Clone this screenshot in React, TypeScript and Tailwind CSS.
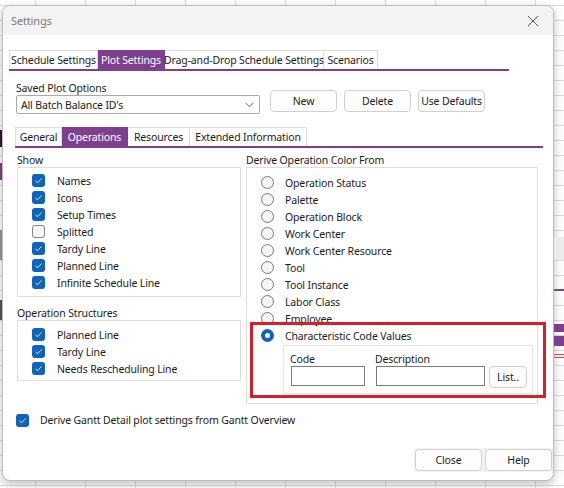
import React from "react";

function Check({ on }: { on: boolean }) {
  if (!on) {
    return <span className="w-[13px] h-[13px] shrink-0 rounded-[3px] border border-[#858585] bg-[#f7f7f7]" />;
  }
  return (
    <span className="w-[13px] h-[13px] shrink-0 rounded-[3px] bg-[#0e63be] flex items-center justify-center">
      <svg width="9" height="9" viewBox="0 0 9 9">
        <path d="M1.6 4.9 L3.5 6.7 L7.5 2.5" fill="none" stroke="#fff" strokeWidth="0.9" />
      </svg>
    </span>
  );
}

function Radio({ on }: { on?: boolean }) {
  if (on) {
    return (
      <span className="w-[13px] h-[13px] shrink-0 rounded-full bg-[#0e63be] flex items-center justify-center">
        <span className="w-[5px] h-[5px] rounded-full bg-white" />
      </span>
    );
  }
  return <span className="w-[13px] h-[13px] shrink-0 rounded-full border border-[#7a7a7a] bg-[#f5f5f5]" />;
}

function CheckRow({ label, on = true }: { label: string; on?: boolean }) {
  return (
    <div className="h-[17px] flex items-center gap-[12px]">
      <Check on={on} />
      <span>{label}</span>
    </div>
  );
}

function RadioRow({ label, on }: { label: string; on?: boolean }) {
  return (
    <div className="h-[17px] flex items-center gap-[11px]">
      <Radio on={on} />
      <span>{label}</span>
    </div>
  );
}

function Button({ label, w }: { label: string; w: string }) {
  return (
    <div className={`${w} h-[22px] shrink-0 whitespace-nowrap rounded-[4px] border border-[#d0d0d0] bg-[#fdfdfd] flex items-center justify-center`}>
      {label}
    </div>
  );
}

function Tab({ label, w, active, first }: { label: string; w: string; active?: boolean; first?: boolean }) {
  return (
    <div
      className={`${w} h-full whitespace-nowrap flex items-center justify-center border-t border-r ${first ? "border-l" : ""} ${
        active ? "bg-[#7f3f8f] text-white border-[#7f3f8f]" : "bg-white border-[#dcdcdc]"
      }`}
    >
      {label}
    </div>
  );
}

const radios = [
  "Operation Status",
  "Palette",
  "Operation Block",
  "Work Center",
  "Work Center Resource",
  "Tool",
  "Tool Instance",
  "Labor Class",
  "Employee",
];

export default function App() {
  return (
    <div className="relative w-[564px] h-[488px] overflow-hidden bg-white bg-[linear-gradient(to_bottom,#dcdcdc_1px,transparent_1px),linear-gradient(to_right,#dcdcdc_1px,transparent_1px)] bg-size-[50px_15px] bg-position-[35px_5px] font-['Noto_Sans',sans-serif] text-[10.5px] tracking-[-0.15px] text-[#1b1b1b] leading-[14px]">
      <div className="flex h-full">
        {/* left strip of the sheet behind */}
        <div className="w-[2px] shrink-0 flex flex-col">
          <div className="h-[130px]" />
          <div className="h-[17px] bg-[#2a1d2e]" />
          <div className="h-[16px]" />
          <div className="h-[17px] bg-[#7f3f8f]" />
          <div className="h-[50px]" />
          <div className="h-[30px] bg-[#9a9a9a]" />
          <div className="h-[40px]" />
          <div className="h-[20px] bg-[#555]" />
        </div>

        {/* dialog */}
        <div className="mt-[5px] w-[552px] h-[476px] shrink-0 flex flex-col rounded-[8px] border border-[#bcbcbc] bg-white shadow-[0_3px_10px_rgba(0,0,0,0.25)] overflow-hidden">
          <div className="h-[29px] shrink-0 bg-[#f3f3f3] flex items-center justify-between pl-[8px] pr-[14px]">
            <span className="text-[11px] text-[#7c7c7c]">Settings</span>
            <svg width="12" height="12" viewBox="0 0 12 12">
              <path d="M1 1 L11 11 M11 1 L1 11" stroke="#5a5a5a" strokeWidth="1" />
            </svg>
          </div>

          <div className="flex-1 flex flex-col pl-[6px]">
            {/* main tabs */}
            <div className="mt-[15px] h-[19px] flex">
              <Tab label="Schedule Settings" w="w-[89px]" first />
              <Tab label="Plot Settings" w="w-[67px]" active />
              <Tab label="Drag-and-Drop Schedule Settings" w="w-[159px]" />
              <Tab label="Scenarios" w="w-[54px]" />
            </div>
            <div className="h-[2px] w-[500px] bg-[#7f3f8f]" />

            {/* saved plot options */}
            <div className="mt-[10px] ml-[7px] flex items-start">
              <div className="flex flex-col">
                <span className="h-[14px]">Saved Plot Options</span>
                <div className="w-[244px] h-[19px] border border-[#a9a9a9] rounded-[2px] flex items-center justify-between pl-[4px] pr-[5px]">
                  <span>All Batch Balance ID's</span>
                  <svg width="9" height="6" viewBox="0 0 9 6">
                    <path d="M0.5 0.8 L4.5 4.8 L8.5 0.8" fill="none" stroke="#555" strokeWidth="0.9" />
                  </svg>
                </div>
              </div>
              <div className="mt-[9px] ml-[10px] flex gap-[7px]">
                <Button label="New" w="w-[67px]" />
                <Button label="Delete" w="w-[67px]" />
                <Button label="Use Defaults" w="w-[67px]" />
              </div>
            </div>

            {/* sub tabs */}
            <div className="mt-[13px] ml-[6px] h-[19px] flex">
              <Tab label="General" w="w-[47px]" first />
              <Tab label="Operations" w="w-[66px]" active />
              <Tab label="Resources" w="w-[62px]" />
              <Tab label="Extended Information" w="w-[117px]" />
            </div>
            <div className="ml-[6px] h-[2px] w-[528px] bg-[#7f3f8f]" />

            {/* columns */}
            <div className="mt-[5px] ml-[8px] flex">
              <div className="w-[224px] flex flex-col">
                <span className="h-[14px]">Show</span>
                <div className="h-[130px] border border-[#dedede] pt-[4px] pl-[14px] flex flex-col">
                  <CheckRow label="Names" />
                  <CheckRow label="Icons" />
                  <CheckRow label="Setup Times" />
                  <CheckRow label="Splitted" on={false} />
                  <CheckRow label="Tardy Line" />
                  <CheckRow label="Planned Line" />
                  <CheckRow label="Infinite Schedule Line" />
                </div>
                <span className="mt-[9px] h-[14px]">Operation Structures</span>
                <div className="h-[61px] border border-[#dedede] pt-[5px] pl-[14px] flex flex-col">
                  <CheckRow label="Planned Line" />
                  <CheckRow label="Tardy Line" />
                  <CheckRow label="Needs Rescheduling Line" />
                </div>
              </div>

              <div className="ml-[5px] w-[292px] flex flex-col">
                <span className="h-[14px]">Derive Operation Color From</span>
                <div className="h-[237px] border border-[#dedede] pt-[6px] pl-[14px] flex flex-col">
                  {radios.map((r) => (
                    <RadioRow key={r} label={r} />
                  ))}
                  <RadioRow label="Characteristic Code Values" on />
                  <div className="mt-px ml-[22px] w-[250px] h-[49px] border border-[#e6e6e6] pt-[6px] pl-[7px] flex items-start">
                    <div className="flex flex-col">
                      <span className="h-[14px] -ml-px">Code</span>
                      <div className="w-[74px] h-[20px] border border-[#7c7c7c]" />
                    </div>
                    <div className="ml-[11px] flex flex-col">
                      <span className="h-[14px] -ml-px">Description</span>
                      <div className="w-[109px] h-[20px] border border-[#7c7c7c]" />
                    </div>
                    <div className="ml-[4px] mt-[14px] w-[38px] h-[22px] rounded-[4px] border border-[#d0d0d0] bg-[#fdfdfd] flex items-center justify-center">
                      List..
                    </div>
                  </div>
                </div>
              </div>
            </div>

            {/* bottom checkbox */}
            <div className="mt-[9px] ml-[7px] h-[14px] flex items-center gap-[11px]">
              <Check on />
              <span>Derive Gantt Detail plot settings from Gantt Overview</span>
            </div>

            {/* footer */}
            <div className="mt-auto mb-[8px] self-end flex gap-[3px] p-px bg-[#f3f3f3]">
              <Button label="Close" w="w-[67px]" />
              <Button label="Help" w="w-[67px]" />
            </div>
          </div>
        </div>

        {/* right strip of the sheet behind */}
        <div className="flex-1 flex flex-col">
          <div className="h-[237px]" />
          <div className="h-[23px] bg-[#ececec]" />
          <div className="h-[29px]" />
          <div className="h-[2px] bg-[#7f3f8f]" />
          <div className="h-[33px]" />
          <div className="h-[8px] bg-[#7f3f8f]" />
          <div className="h-[4px]" />
          <div className="h-[10px] bg-[#7f3f8f]" />
          <div className="h-[8px]" />
          <div className="h-px bg-[#d84a4a]" />
          <div className="h-[2px]" />
          <div className="h-px bg-[#d84a4a]" />
        </div>
      </div>

      {/* red annotation box */}
      <div className="absolute left-[250px] top-[322px] w-[296px] h-[76px] border-[3px] border-[#d4202a]" />
    </div>
  );
}
